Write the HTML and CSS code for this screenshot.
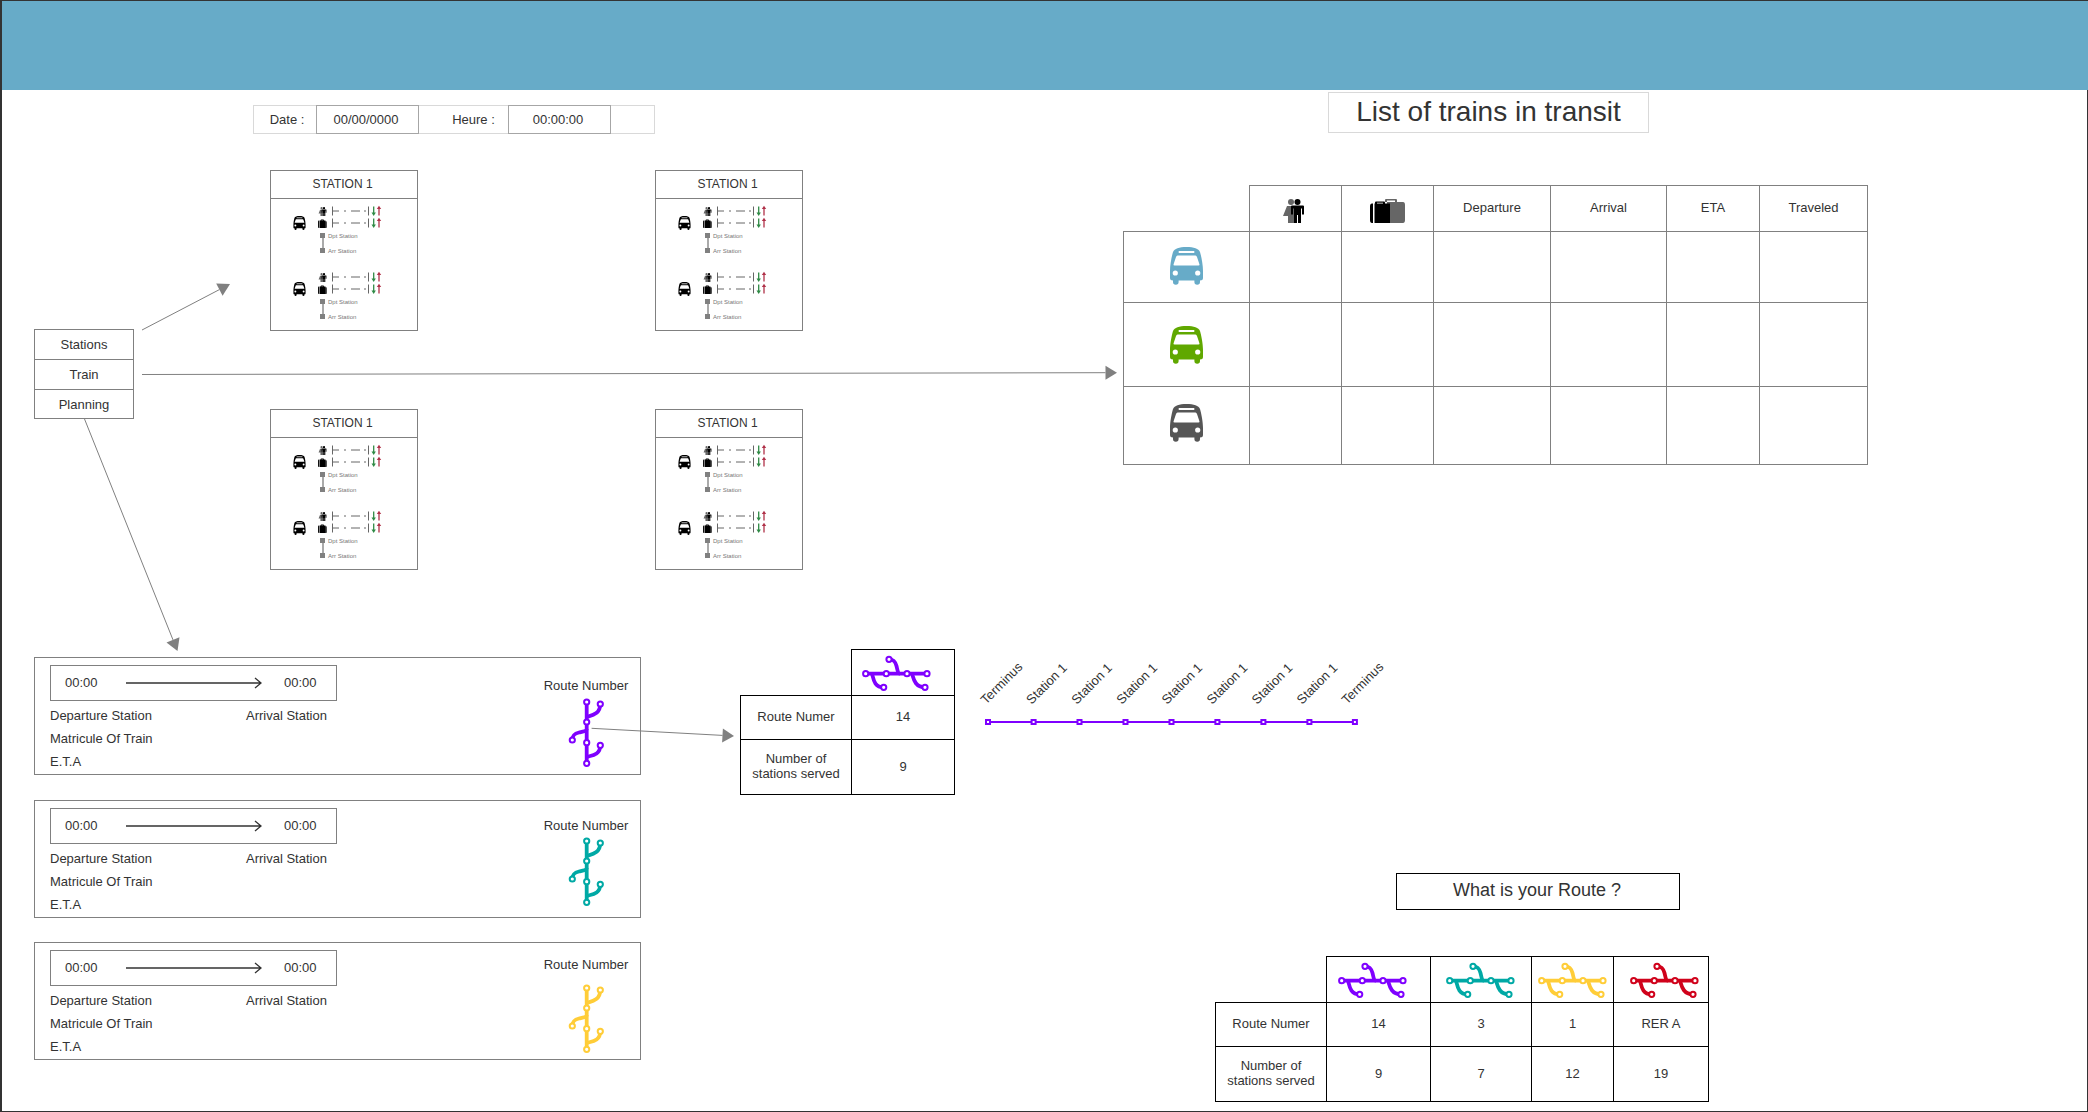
FILE: index.html
```html
<!DOCTYPE html>
<html lang="en">
<head>
    <meta charset="UTF-8">
    <meta name="viewport" content="width=device-width, initial-scale=1.0">
    <title>Transit wireframe</title>
    <link rel="stylesheet" href="styles.css">
</head>
<body>
    <!-- shared icons -->
    <svg class="sprite">
        <symbol id="bus" viewBox="0 0 33 38">
            <path fill="currentColor" d="M16.5 0C24 0 28.5 1.5 30 5C31.5 10 33 18 33 24V31Q33 33.5 30 33.5V35A2.8 2.8 0 0 1 24.4 35V33.5H8.6V35A2.8 2.8 0 0 1 3 35V33.5Q0 33.5 0 31V24C0 18 1.5 10 3 5C4.5 1.5 9 0 16.5 0Z"/>
            <rect x="8.7" y="4" width="15.6" height="2" fill="#fff"/>
            <path fill="#fff" d="M7.5 8.5H25.5Q26.5 8.5 27 10L29.5 17.5Q29.7 18.5 28.5 18.5H4.5Q3.3 18.5 3.5 17.5L6 10Q6.5 8.5 7.5 8.5Z"/>
            <circle cx="5.3" cy="26" r="2.6" fill="#fff"/>
            <circle cx="27.7" cy="26" r="2.6" fill="#fff"/>
        </symbol>
        <symbol id="people" viewBox="0 0 21 24">
            <circle cx="8" cy="3" r="3" fill="#666"/>
            <path fill="#666" d="M4 7H11V24H5V17H0L4 7Z"/>
            <circle cx="14.5" cy="3" r="3"/>
            <path d="M8 7.5Q8 6.5 9 6.5H20Q21 6.5 21 7.5V15.5H19V9.5H18V24H15V16H14V24H11V9.5H10V15.5H8Z"/>
        </symbol>
        <symbol id="bag" viewBox="0 0 35 24">
            <path fill="#666" d="M15 3V1Q15 0 16 0H26Q27 0 27 1V3H33Q35 3 35 6V21Q35 24 33 24H17V3ZM17 3H25V1.5H17Z" fill-rule="evenodd"/>
            <path d="M5 4.5V3.5Q5 2.5 6 2.5H14Q15 2.5 15 3.5V4.5H20V24H4.5V4.5ZM7 4.5H13V3.8H7ZM3 4.5V24H2Q0 24 0 21V7.5Q0 4.5 2 4.5Z" fill-rule="evenodd"/>
        </symbol>
        <symbol id="bag-small" viewBox="0 0 24 24">
            <path fill="#555" d="M14 6H22Q24 6 24 9V21Q24 24 22 24H14Z"/>
            <path d="M7 3Q7 1 9 1H14Q16 1 16 3V4H20V24H4V4H7ZM9 4H14V3H9ZM2.5 4V24H2Q0 24 0 21V7Q0 4 2 4Z" fill-rule="evenodd"/>
        </symbol>
        <symbol id="track" viewBox="0 0 52 12">
            <path stroke="#666" fill="none" d="M.5 1.5V10.5M36.5 1.5V10.5"/>
            <path stroke="#666" fill="none" stroke-dasharray="6 5 2 5 9 4 2" d="M1 6H36"/>
            <path stroke="#2f8a45" stroke-width="1.3" fill="none" d="M41.7 1.5V9"/>
            <path fill="#2f8a45" d="M39.5 7.5H43.9L41.7 11Z"/>
            <path stroke="#b03048" stroke-width="1.3" fill="none" d="M47 3V10.5"/>
            <path fill="#b03048" d="M44.8 4H49.2L47 .8Z"/>
        </symbol>
        <symbol id="metro" viewBox="0 0 70 36">
            <g fill="none" stroke="currentColor" stroke-width="3.8">
                <path d="M3.7 18.7H65"/>
                <path d="M27 4.3C32 4.3 33.5 7 34.5 11C35.5 15 36 18.7 38 18.7"/>
                <path d="M10 18.7C11.5 23 11.5 32.3 21.7 32.3"/>
                <path d="M50 18.7C51.5 23 52.5 32.3 63 32.3"/>
            </g>
            <g fill="#fff" stroke="currentColor" stroke-width="2">
                <circle cx="3.7" cy="18.7" r="2.6"/>
                <circle cx="24.3" cy="18.7" r="2.6"/>
                <circle cx="45" cy="18.7" r="2.6"/>
                <circle cx="65" cy="18.7" r="2.6"/>
                <circle cx="27" cy="4.3" r="2.6"/>
                <circle cx="21.7" cy="32.3" r="2.6"/>
                <circle cx="63" cy="32.3" r="2.6"/>
            </g>
        </symbol>
        <symbol id="metro-v" viewBox="0 0 36 70">
            <use href="#metro" width="70" height="36" transform="translate(0 70) rotate(-90)"/>
        </symbol>
    </svg>

    <div class="board">
        <header class="top-bar"></header>

        <!-- date and time -->
        <div class="clock">
            <span class="clock-date">Date :</span>
            <span class="clock-field">00/00/0000</span>
            <span class="clock-hour">Heure :</span>
            <span class="clock-field">00:00:00</span>
            <span></span>
        </div>

        <h1 class="title">List of trains in transit</h1>

        <!-- menu -->
        <nav class="menu">
            <div class="menu-item">Stations</div>
            <div class="menu-item">Train</div>
            <div class="menu-item">Planning</div>
        </nav>

        <!-- stations -->
        <section class="station station-a">
            <div class="station-name">STATION 1</div>
            <div class="station-body">
                <div class="group">
                    <svg class="bus-small"><use href="#bus"/></svg>
                    <div class="group-info">
                        <div class="load-row"><svg class="load-people"><use href="#people"/></svg><svg class="load-track"><use href="#track"/></svg></div>
                        <div class="load-row"><svg class="load-bag"><use href="#bag-small"/></svg><svg class="load-track"><use href="#track"/></svg></div>
                        <div class="stop stop-first"><i></i>Dpt Station</div>
                        <div class="stop-link"></div>
                        <div class="stop"><i></i>Arr Station</div>
                    </div>
                </div>
                <div class="group">
                    <svg class="bus-small"><use href="#bus"/></svg>
                    <div class="group-info">
                        <div class="load-row"><svg class="load-people"><use href="#people"/></svg><svg class="load-track"><use href="#track"/></svg></div>
                        <div class="load-row"><svg class="load-bag"><use href="#bag-small"/></svg><svg class="load-track"><use href="#track"/></svg></div>
                        <div class="stop stop-first"><i></i>Dpt Station</div>
                        <div class="stop-link"></div>
                        <div class="stop"><i></i>Arr Station</div>
                    </div>
                </div>
            </div>
        </section>

        <section class="station station-b">
            <div class="station-name">STATION 1</div>
            <div class="station-body">
                <div class="group">
                    <svg class="bus-small"><use href="#bus"/></svg>
                    <div class="group-info">
                        <div class="load-row"><svg class="load-people"><use href="#people"/></svg><svg class="load-track"><use href="#track"/></svg></div>
                        <div class="load-row"><svg class="load-bag"><use href="#bag-small"/></svg><svg class="load-track"><use href="#track"/></svg></div>
                        <div class="stop stop-first"><i></i>Dpt Station</div>
                        <div class="stop-link"></div>
                        <div class="stop"><i></i>Arr Station</div>
                    </div>
                </div>
                <div class="group">
                    <svg class="bus-small"><use href="#bus"/></svg>
                    <div class="group-info">
                        <div class="load-row"><svg class="load-people"><use href="#people"/></svg><svg class="load-track"><use href="#track"/></svg></div>
                        <div class="load-row"><svg class="load-bag"><use href="#bag-small"/></svg><svg class="load-track"><use href="#track"/></svg></div>
                        <div class="stop stop-first"><i></i>Dpt Station</div>
                        <div class="stop-link"></div>
                        <div class="stop"><i></i>Arr Station</div>
                    </div>
                </div>
            </div>
        </section>

        <section class="station station-c">
            <div class="station-name">STATION 1</div>
            <div class="station-body">
                <div class="group">
                    <svg class="bus-small"><use href="#bus"/></svg>
                    <div class="group-info">
                        <div class="load-row"><svg class="load-people"><use href="#people"/></svg><svg class="load-track"><use href="#track"/></svg></div>
                        <div class="load-row"><svg class="load-bag"><use href="#bag-small"/></svg><svg class="load-track"><use href="#track"/></svg></div>
                        <div class="stop stop-first"><i></i>Dpt Station</div>
                        <div class="stop-link"></div>
                        <div class="stop"><i></i>Arr Station</div>
                    </div>
                </div>
                <div class="group">
                    <svg class="bus-small"><use href="#bus"/></svg>
                    <div class="group-info">
                        <div class="load-row"><svg class="load-people"><use href="#people"/></svg><svg class="load-track"><use href="#track"/></svg></div>
                        <div class="load-row"><svg class="load-bag"><use href="#bag-small"/></svg><svg class="load-track"><use href="#track"/></svg></div>
                        <div class="stop stop-first"><i></i>Dpt Station</div>
                        <div class="stop-link"></div>
                        <div class="stop"><i></i>Arr Station</div>
                    </div>
                </div>
            </div>
        </section>

        <section class="station station-d">
            <div class="station-name">STATION 1</div>
            <div class="station-body">
                <div class="group">
                    <svg class="bus-small"><use href="#bus"/></svg>
                    <div class="group-info">
                        <div class="load-row"><svg class="load-people"><use href="#people"/></svg><svg class="load-track"><use href="#track"/></svg></div>
                        <div class="load-row"><svg class="load-bag"><use href="#bag-small"/></svg><svg class="load-track"><use href="#track"/></svg></div>
                        <div class="stop stop-first"><i></i>Dpt Station</div>
                        <div class="stop-link"></div>
                        <div class="stop"><i></i>Arr Station</div>
                    </div>
                </div>
                <div class="group">
                    <svg class="bus-small"><use href="#bus"/></svg>
                    <div class="group-info">
                        <div class="load-row"><svg class="load-people"><use href="#people"/></svg><svg class="load-track"><use href="#track"/></svg></div>
                        <div class="load-row"><svg class="load-bag"><use href="#bag-small"/></svg><svg class="load-track"><use href="#track"/></svg></div>
                        <div class="stop stop-first"><i></i>Dpt Station</div>
                        <div class="stop-link"></div>
                        <div class="stop"><i></i>Arr Station</div>
                    </div>
                </div>
            </div>
        </section>

        <!-- trains in transit -->
        <table class="grid trains">
            <tr class="row-head">
                <th class="blank"></th>
                <th><svg class="head-people"><use href="#people"/></svg></th>
                <th><svg class="head-bag"><use href="#bag"/></svg></th>
                <th>Departure</th>
                <th>Arrival</th>
                <th>ETA</th>
                <th>Traveled</th>
            </tr>
            <tr class="row-blue">
                <td><svg class="bus-large bus-blue"><use href="#bus"/></svg></td>
                <td></td><td></td><td></td><td></td><td></td><td></td>
            </tr>
            <tr class="row-green">
                <td><svg class="bus-large bus-green"><use href="#bus"/></svg></td>
                <td></td><td></td><td></td><td></td><td></td><td></td>
            </tr>
            <tr class="row-grey">
                <td><svg class="bus-large bus-grey"><use href="#bus"/></svg></td>
                <td></td><td></td><td></td><td></td><td></td><td></td>
            </tr>
        </table>

        <!-- planning cards -->
        <article class="card card-a">
            <div class="card-main">
                <div class="times">
                    <span>00:00</span>
                    <svg class="time-arrow" viewBox="0 0 136 12"><path d="M0 6H135M129 1L135 6L129 11"/></svg>
                    <span>00:00</span>
                </div>
                <div class="card-line"><span class="card-from">Departure Station</span><span>Arrival Station</span></div>
                <div class="card-line">Matricule Of Train</div>
                <div class="card-line">E.T.A</div>
            </div>
            <div class="route route-a">
                <div class="route-label">Route Number</div>
                <svg class="metro-v purple"><use href="#metro-v"/></svg>
            </div>
        </article>

        <article class="card card-b">
            <div class="card-main">
                <div class="times">
                    <span>00:00</span>
                    <svg class="time-arrow" viewBox="0 0 136 12"><path d="M0 6H135M129 1L135 6L129 11"/></svg>
                    <span>00:00</span>
                </div>
                <div class="card-line"><span class="card-from">Departure Station</span><span>Arrival Station</span></div>
                <div class="card-line">Matricule Of Train</div>
                <div class="card-line">E.T.A</div>
            </div>
            <div class="route route-b">
                <div class="route-label">Route Number</div>
                <svg class="metro-v teal"><use href="#metro-v"/></svg>
            </div>
        </article>

        <article class="card card-c">
            <div class="card-main">
                <div class="times">
                    <span>00:00</span>
                    <svg class="time-arrow" viewBox="0 0 136 12"><path d="M0 6H135M129 1L135 6L129 11"/></svg>
                    <span>00:00</span>
                </div>
                <div class="card-line"><span class="card-from">Departure Station</span><span>Arrival Station</span></div>
                <div class="card-line">Matricule Of Train</div>
                <div class="card-line">E.T.A</div>
            </div>
            <div class="route route-c">
                <div class="route-label">Route Number</div>
                <svg class="metro-v yellow"><use href="#metro-v"/></svg>
            </div>
        </article>

        <!-- one route -->
        <table class="grid black route-one">
            <tr class="row-icons">
                <th class="blank"></th>
                <th><svg class="metro-h purple nudge-left"><use href="#metro"/></svg></th>
            </tr>
            <tr class="row-number">
                <td>Route Numer</td>
                <td>14</td>
            </tr>
            <tr class="row-served">
                <td>Number of<br>stations served</td>
                <td>9</td>
            </tr>
        </table>

        <svg class="route-line" viewBox="0 0 390 75">
            <path class="route-track" d="M8 67H375"/>
            <g class="route-stops">
                <rect x="6" y="65" width="4" height="4"/>
                <rect x="51.6" y="65" width="4" height="4"/>
                <rect x="97.5" y="65" width="4" height="4"/>
                <rect x="143.5" y="65" width="4" height="4"/>
                <rect x="189.5" y="65" width="4" height="4"/>
                <rect x="235.4" y="65" width="4" height="4"/>
                <rect x="281.4" y="65" width="4" height="4"/>
                <rect x="327.4" y="65" width="4" height="4"/>
                <rect x="372.9" y="65" width="4" height="4"/>
            </g>
            <g class="route-names">
                <text x="6" y="50" transform="rotate(-45 6 50)">Terminus</text>
                <text x="51.6" y="50" transform="rotate(-45 51.6 50)">Station 1</text>
                <text x="96.7" y="50" transform="rotate(-45 96.7 50)">Station 1</text>
                <text x="141.8" y="50" transform="rotate(-45 141.8 50)">Station 1</text>
                <text x="186.9" y="50" transform="rotate(-45 186.9 50)">Station 1</text>
                <text x="232" y="50" transform="rotate(-45 232 50)">Station 1</text>
                <text x="277" y="50" transform="rotate(-45 277 50)">Station 1</text>
                <text x="322" y="50" transform="rotate(-45 322 50)">Station 1</text>
                <text x="367" y="50" transform="rotate(-45 367 50)">Terminus</text>
            </g>
        </svg>

        <!-- all routes -->
        <div class="question">What is your Route ?</div>

        <table class="grid black routes">
            <tr class="row-icons">
                <th class="blank"></th>
                <th><svg class="metro-h purple nudge-left"><use href="#metro"/></svg></th>
                <th><svg class="metro-h teal"><use href="#metro"/></svg></th>
                <th><svg class="metro-h yellow"><use href="#metro"/></svg></th>
                <th><svg class="metro-h red nudge-right"><use href="#metro"/></svg></th>
            </tr>
            <tr class="row-number">
                <td>Route Numer</td>
                <td>14</td>
                <td>3</td>
                <td>1</td>
                <td>RER A</td>
            </tr>
            <tr class="row-served">
                <td>Number of<br>stations served</td>
                <td>9</td>
                <td>7</td>
                <td>12</td>
                <td>19</td>
            </tr>
        </table>

        <!-- connectors between the screens -->
        <svg class="links" viewBox="0 0 2088 1112">
            <path d="M142 330L219.4 289.6"/>
            <polygon points="230,284 222.6,295.8 216.2,283.4"/>
            <path d="M142 374.5L1105.5 372.7"/>
            <polygon points="1117,372.7 1105.5,365.7 1105.5,379.7"/>
            <path d="M84.4 418.7L173 639.9"/>
            <polygon points="177.5,651 179.5,637.3 166.5,642.5"/>
            <path d="M591.6 728.3L722.5 735.4"/>
            <polygon points="734,736 722.9,728.4 722.1,742.4"/>
        </svg>
    </div>
</body>
</html>
```

FILE: styles.css
```css
* {
    box-sizing: border-box;
}
html, body {
    margin: 0;
    padding: 0;
}
body {
    font-family: "Liberation Sans", Arial, sans-serif;
    font-size: 13px;
    color: #333;
    background-color: #fff;
}
.sprite {
    display: block;
    width: 0;
    height: 0;
}

/* the page is a free wireframe canvas, screens sit where they were drawn */
.board {
    position: relative;
    width: 2088px;
    height: 1112px;
    overflow: hidden;
    box-shadow: inset 2px 1px 0 #333, inset -1px -1px 0 #333;
}
.top-bar {
    height: 89px;
    margin: 1px 0 0 2px;
    background-color: #67abc8;
}

/* date and time */
.clock {
    position: absolute;
    left: 253px;
    top: 105px;
    width: 402px;
    height: 29px;
    display: grid;
    grid-template-columns: 62px 103px 89px 103px 1fr;
    align-items: stretch;
    border: 1px solid #d9d9d9;
}
.clock span {
    display: flex;
    align-items: center;
    justify-content: center;
}
.clock .clock-date {
    padding-left: 4px;
}
.clock .clock-hour {
    padding-left: 20px;
}
.clock .clock-field {
    border: 1px solid #a6a6a6;
    margin: -1px 0;
    padding-right: 3px;
}
.title {
    position: absolute;
    left: 1328px;
    top: 92px;
    width: 321px;
    height: 41px;
    margin: 0;
    border: 1px solid #d9d9d9;
    font-size: 28px;
    font-weight: normal;
    line-height: 37px;
    text-align: center;
}

/* menu */
.menu {
    position: absolute;
    left: 34px;
    top: 329px;
    width: 100px;
    height: 90px;
    border: 1px solid #808080;
    display: grid;
    grid-template-rows: 30px 30px 1fr;
}
.menu-item {
    display: flex;
    align-items: center;
    justify-content: center;
    border-bottom: 1px solid #808080;
}
.menu-item:last-child {
    border-bottom: none;
}

/* station boxes */
.station {
    position: absolute;
    width: 148px;
    height: 161px;
    border: 1px solid #808080;
}
.station-a { left: 270px; top: 170px; }
.station-b { left: 655px; top: 170px; }
.station-c { left: 270px; top: 409px; }
.station-d { left: 655px; top: 409px; }
.station-name {
    height: 28px;
    padding-right: 3px;
    border-bottom: 1px solid #808080;
    font-size: 12px;
    line-height: 27px;
    text-align: center;
}
.station-body {
    display: flex;
    flex-direction: column;
    gap: 14px;
    padding: 6px 0 0 22px;
}
.group {
    display: flex;
    gap: 12px;
    height: 52px;
}
.bus-small {
    width: 13px;
    height: 14px;
    margin-top: 11px;
    color: #000;
}
.group-info {
    display: flex;
    flex-direction: column;
}
.load-row {
    display: flex;
    align-items: center;
    height: 12px;
}
.load-people,
.load-bag {
    width: 9px;
    height: 9px;
    margin-right: 5px;
}
.load-track {
    width: 52px;
    height: 12px;
}
.stop {
    display: flex;
    align-items: center;
    gap: 3px;
    height: 5px;
    margin-left: 2px;
    font-size: 6px;
    color: #777;
    white-space: nowrap;
}
.stop i {
    width: 5px;
    height: 5px;
    background-color: #808080;
}
.stop-first {
    margin-top: 4px;
}
.stop-link {
    width: 2px;
    height: 10px;
    margin-left: 3.5px;
    background-color: #aaa;
}

/* tables */
.grid {
    position: absolute;
    border-collapse: collapse;
    table-layout: fixed;
}
.grid th,
.grid td {
    padding: 0;
    border: 1px solid #808080;
    font-weight: normal;
    text-align: center;
    vertical-align: middle;
}
.grid .blank {
    border-top: none;
    border-left: none;
}
.grid svg {
    display: block;
    margin: 0 auto;
}
.black th,
.black td {
    border-color: #000;
}

.trains {
    left: 1123px;
    top: 185px;
    width: 744px;
}
.trains th:nth-child(1) { width: 126px; }
.trains th:nth-child(2) { width: 92px; }
.trains th:nth-child(3) { width: 92px; }
.trains th:nth-child(4) { width: 117px; }
.trains th:nth-child(5) { width: 116px; }
.trains th:nth-child(6) { width: 93px; }
.trains th:nth-child(7) { width: 108px; }
.trains .row-head th {
    padding-bottom: 2px;
}
.trains .row-head th:nth-child(2),
.trains .row-head th:nth-child(3) {
    padding-bottom: 0;
}
.row-head { height: 46px; }
.row-blue { height: 71px; }
.row-green { height: 84px; }
.row-grey { height: 78px; }
.trains .head-people {
    width: 21px;
    height: 24px;
    margin-top: 4px;
    transform: translateX(-2px);
}
.trains .head-bag {
    width: 35px;
    height: 24px;
    margin-top: 4px;
}
.bus-large {
    width: 33px;
    height: 38px;
}
.trains .bus-blue {
    color: #67abc8;
    transform: translateY(-1px);
}
.bus-green { color: #60a800; }
.trains .bus-grey {
    color: #565656;
    transform: translateY(-3px);
}

/* planning cards */
.card {
    position: absolute;
    left: 34px;
    width: 607px;
    height: 118px;
    border: 1px solid #808080;
    display: flex;
    justify-content: space-between;
}
.card-a { top: 657px; }
.card-b { top: 800px; }
.card-c { top: 942px; }
.card-main {
    width: 303px;
    padding: 7px 0 0 15px;
}
.times {
    display: flex;
    align-items: center;
    width: 287px;
    height: 36px;
    margin-bottom: 3px;
    padding: 0 0 2px 14px;
    border: 1px solid #808080;
}
.time-arrow {
    width: 136px;
    height: 12px;
    margin: 2px 22px 0 28.5px;
    fill: none;
    stroke: #333;
    stroke-width: 1.3;
}
.card-line {
    display: flex;
    height: 23px;
    line-height: 23px;
}
.card-from {
    width: 196px;
}
.route {
    display: flex;
    flex-direction: column;
    align-items: center;
    width: 100px;
    margin-right: 4px;
}
.route-a { padding-top: 20px; gap: 4px; }
.route-b { padding-top: 17px; gap: 3px; }
.route-c { padding-top: 14px; gap: 11px; }
.route-label {
    height: 15px;
    line-height: 15px;
    white-space: nowrap;
}
.metro-v {
    width: 36px;
    height: 70px;
}
.metro-h {
    width: 70px;
    height: 36px;
}
.nudge-left { transform: translateX(-6px); }
.nudge-right { transform: translateX(4px); }
.purple { color: #7f00ff; }
.teal { color: #00a9a5; }
.yellow { color: #ffcd38; }
.red { color: #d0021b; }

/* route tables */
.row-icons { height: 46px; }
.row-number { height: 44px; }
.row-served { height: 55px; }
.row-number td,
.row-served td {
    padding-bottom: 2px;
}
.route-one {
    left: 740px;
    top: 649px;
    width: 214px;
}
.route-one th:nth-child(1) { width: 111px; }
.route-one th:nth-child(2) { width: 103px; }
.routes {
    left: 1215px;
    top: 956px;
    width: 493px;
}
.routes th:nth-child(1) { width: 111px; }
.routes th:nth-child(2) { width: 104px; }
.routes th:nth-child(3) { width: 101px; }
.routes th:nth-child(4) { width: 82px; }
.routes th:nth-child(5) { width: 95px; }

/* line diagram of one route */
.route-line {
    position: absolute;
    left: 980px;
    top: 655px;
    width: 390px;
    height: 75px;
    overflow: visible;
}
.route-track {
    fill: none;
    stroke: #7f00ff;
    stroke-width: 2.2;
}
.route-stops rect {
    fill: #fff;
    stroke: #7f00ff;
    stroke-width: 2;
}
.route-names text {
    font-size: 13px;
    fill: #333;
}

.question {
    position: absolute;
    left: 1396px;
    top: 873px;
    width: 284px;
    height: 37px;
    padding-right: 2px;
    border: 1px solid #000;
    font-size: 18px;
    line-height: 32px;
    text-align: center;
}

/* connectors */
.links {
    position: absolute;
    left: 0;
    top: 0;
    width: 2088px;
    height: 1112px;
}
.links path {
    fill: none;
    stroke: #808080;
}
.links polygon {
    fill: #808080;
}
```
